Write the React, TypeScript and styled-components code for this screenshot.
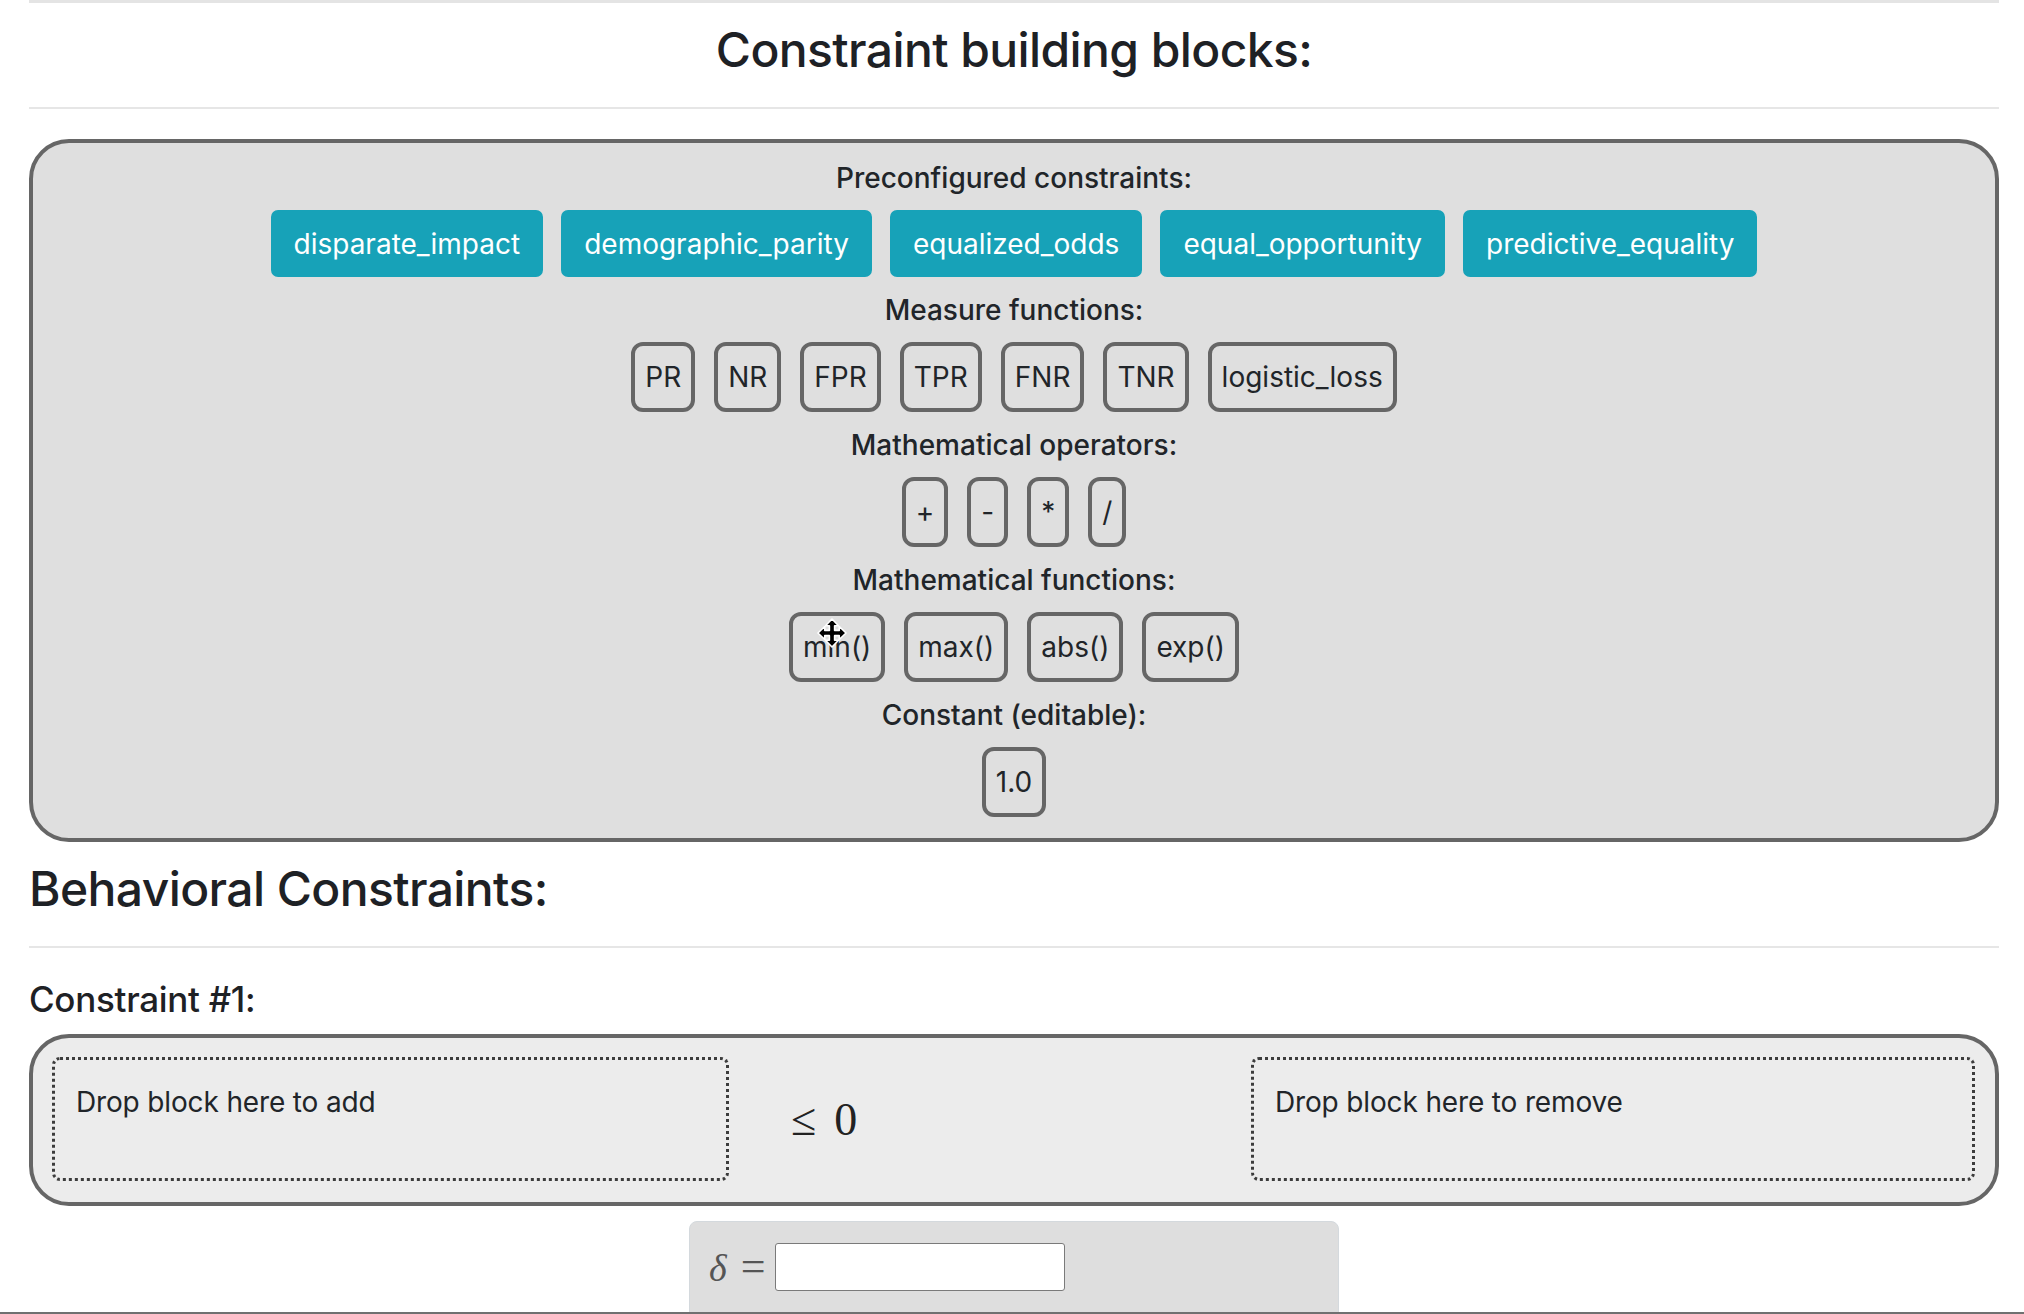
import React from "react";
import styled, { createGlobalStyle } from "styled-components";

const GlobalStyle = createGlobalStyle`
  html, body { margin: 0; padding: 0; background: #ffffff; }
  body {
    font-family: Inter, "Noto Sans", "Liberation Sans", sans-serif;
    color: #212529;
    font-size: 28px;
    line-height: 1.5;
    height: 1314px;
    overflow: hidden;
  }
  body::after {
    content: "";
    position: fixed;
    left: 0;
    right: 0;
    bottom: 0;
    height: 2px;
    background: #707070;
  }
`;

const Container = styled.div`
  margin: 0 25px 0 29px;
  border-top: 3px solid #e4e4e4;
`;

const PageTitle = styled.h3`
  margin: 18px 0 0;
  font-size: 48px;
  font-weight: 500;
  letter-spacing: -0.6px;
  line-height: 1.2;
  text-align: center;
  color: #1e2125;
`;

const SectionTitle = styled.h3`
  margin: 18px 0 0;
  font-size: 48px;
  font-weight: 500;
  letter-spacing: -0.6px;
  line-height: 1.2;
  color: #1e2125;
`;

const Rule = styled.hr<{ $before?: number; $after?: number }>`
  border: 0;
  border-top: 2px solid #e6e6e6;
  margin: ${(p) => p.$before ?? 28}px 0 ${(p) => p.$after ?? 28}px;
`;

const Panel = styled.div`
  border: 4px solid #666666;
  border-radius: 40px;
  background: #dfdfdf;
  padding: 14px 20px 21px;
  text-align: center;
`;

const GroupLabel = styled.div`
  font-weight: 500;
  line-height: 42px;
  margin-bottom: 11px;
`;

const BlockRow = styled.div<{ $gap: number; $last?: boolean }>`
  display: flex;
  justify-content: center;
  gap: ${(p) => p.$gap}px;
  margin-bottom: ${(p) => (p.$last ? 0 : 12)}px;
`;

const PresetButton = styled.div`
  background: #17a2b8;
  border: 2px solid #17a2b8;
  border-radius: 7px;
  color: #ffffff;
  line-height: 42px;
  padding: 11px 21px 10px;
  font-size: 28px;
`;

const Block = styled.div`
  position: relative;
  border: 4px solid #666666;
  border-radius: 12px;
  padding: 10px;
  line-height: 42px;
  font-size: 28px;
  color: #212529;
`;

const MoveCursor = styled.svg`
  position: absolute;
  left: 24px;
  top: 2px;
  width: 30px;
  height: 30px;
`;

const ConstraintLabel = styled.h5`
  margin: 0 0 14px;
  font-size: 35px;
  font-weight: 500;
  letter-spacing: -0.3px;
  line-height: 42px;
  color: #1e2125;
`;

const ConstraintBox = styled.div`
  display: grid;
  grid-template-columns: 677px 1fr 724px;
  align-items: center;
  border: 4px solid #666666;
  border-radius: 40px;
  background: #ececec;
  padding: 19px 20px 21px 19px;
`;

const DropZone = styled.div`
  box-sizing: border-box;
  height: 124px;
  border: 3px dotted #3c3c3c;
  border-radius: 8px;
  padding: 21px;
  line-height: 42px;
  letter-spacing: -0.15px;
`;

const Relation = styled.div`
  padding-left: 62px;
  font-family: "Liberation Serif", "DejaVu Serif", serif;
  font-size: 46px;
  color: #222222;
  display: flex;
  align-items: baseline;
  gap: 18px;
`;

const DeltaBox = styled.div`
  width: 650px;
  height: 200px;
  box-sizing: border-box;
  margin: 15px auto 0;
  background: #dedede;
  border: 1px solid #d4d9dd;
  border-radius: 8px;
  padding: 21px 19px;
  display: flex;
  align-items: flex-start;
  gap: 9px;
`;

const DeltaLabel = styled.div`
  font-family: "Liberation Serif", "DejaVu Serif", serif;
  line-height: 48px;
  color: #555555;
  display: flex;
  align-items: baseline;
  gap: 14px;
`;

const DeltaSymbol = styled.span<{ $italic?: boolean; $size: number }>`
  font-style: ${(p) => (p.$italic ? "italic" : "normal")};
  font-size: ${(p) => p.$size}px;
`;

const DeltaInput = styled.input`
  box-sizing: border-box;
  width: 290px;
  height: 48px;
  border: 1px solid #7a7a7a;
  border-radius: 3px;
  background: #ffffff;
  font-size: 24px;
`;

const presets = [
  "disparate_impact",
  "demographic_parity",
  "equalized_odds",
  "equal_opportunity",
  "predictive_equality",
];
const measures = ["PR", "NR", "FPR", "TPR", "FNR", "TNR", "logistic_loss"];
const operators = ["+", "-", "*", "/"];
const functions = ["min()", "max()", "abs()", "exp()"];

export default function App() {
  return (
    <>
      <GlobalStyle />
      <Container>
        <PageTitle>Constraint building blocks:</PageTitle>
        <Rule $after={30} />
        <Panel>
          <GroupLabel>Preconfigured constraints:</GroupLabel>
          <BlockRow $gap={18}>
            {presets.map((p) => (
              <PresetButton key={p}>{p}</PresetButton>
            ))}
          </BlockRow>
          <GroupLabel>Measure functions:</GroupLabel>
          <BlockRow $gap={19}>
            {measures.map((m) => (
              <Block key={m}>{m}</Block>
            ))}
          </BlockRow>
          <GroupLabel>Mathematical operators:</GroupLabel>
          <BlockRow $gap={19}>
            {operators.map((o) => (
              <Block key={o}>{o}</Block>
            ))}
          </BlockRow>
          <GroupLabel>Mathematical functions:</GroupLabel>
          <BlockRow $gap={19}>
            {functions.map((f, i) => (
              <Block key={f}>
                {f}
                {i === 0 && (
                  <MoveCursor viewBox="0 0 24 24">
                    <path
                      d="M12 0.8 L17.2 6.2 H14.1 V9.9 H17.8 V6.8 L23.2 12 L17.8 17.2 V14.1 H14.1 V17.8 H17.2 L12 23.2 L6.8 17.8 H9.9 V14.1 H6.2 V17.2 L0.8 12 L6.2 6.8 V9.9 H9.9 V6.2 H6.8 Z"
                      fill="#000"
                      stroke="#fff"
                      strokeWidth="1.3"
                      strokeLinejoin="round"
                    />
                  </MoveCursor>
                )}
              </Block>
            ))}
          </BlockRow>
          <GroupLabel>Constant (editable):</GroupLabel>
          <BlockRow $gap={19} $last>
            <Block>1.0</Block>
          </BlockRow>
        </Panel>
        <SectionTitle>Behavioral Constraints:</SectionTitle>
        <Rule $before={29} $after={30} />
        <ConstraintLabel>Constraint #1:</ConstraintLabel>
        <ConstraintBox>
          <DropZone>Drop block here to add</DropZone>
          <Relation>
            <span>≤</span>
            <span>0</span>
          </Relation>
          <DropZone>Drop block here to remove</DropZone>
        </ConstraintBox>
        <DeltaBox>
          <DeltaLabel>
            <DeltaSymbol $italic $size={38}>δ</DeltaSymbol>
            <DeltaSymbol $size={44}>=</DeltaSymbol>
          </DeltaLabel>
          <DeltaInput type="text" />
        </DeltaBox>
      </Container>
    </>
  );
}
